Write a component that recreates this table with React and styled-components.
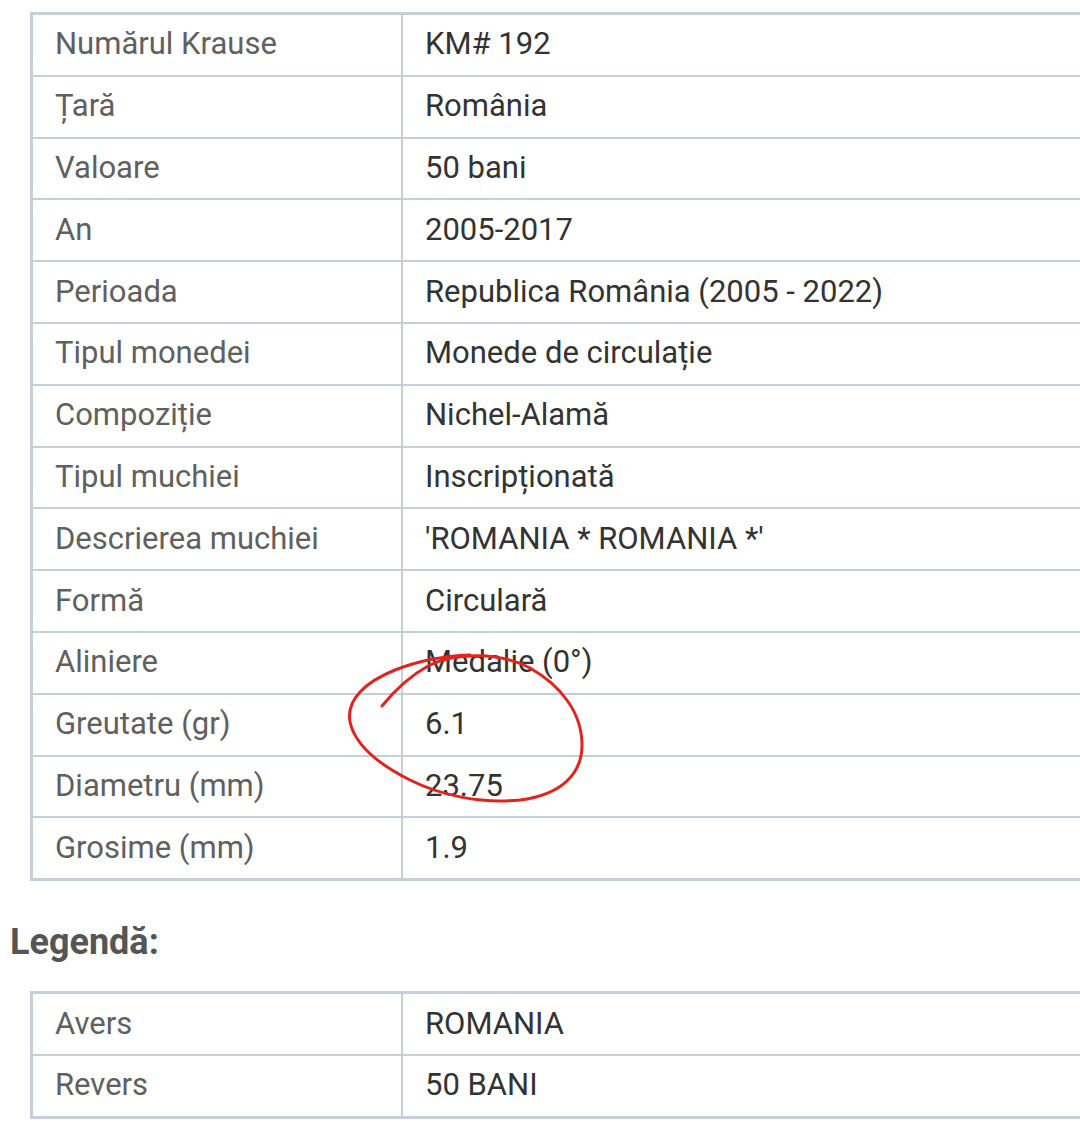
import styled, { createGlobalStyle } from "styled-components";

const GlobalStyle = createGlobalStyle`
  body {
    margin: 0;
    background: #fff;
    font-family: Roboto, "Noto Sans", sans-serif;
    overflow: hidden;
  }
`;

const Page = styled.div`
  position: relative;
  width: 1080px;
  padding-top: 12px;
`;

const Table = styled.table`
  margin-left: 30px;
  width: 1100px;
  border-collapse: collapse;
  table-layout: fixed;
  border: 3px solid #c7cfd6;
`;

const Cell = styled.td`
  border: 2px solid #c7cfd6;
  height: 57.8px;
  padding: 0 0 2px 22px;
  font-size: 31px;
  color: ${(p) => (p.$label ? "#606060" : "#333")};
  width: ${(p) => (p.$label ? "346px" : "auto")};
  vertical-align: middle;
  white-space: nowrap;
`;

const Heading = styled.h3`
  margin: 39px 0 27px 10px;
  font-size: 36px;
  line-height: 44px;
  font-weight: 700;
  color: #555;
`;

const Scribble = styled.svg`
  position: absolute;
  left: 0;
  top: 0;
  pointer-events: none;
`;

const details = [
  ["Numărul Krause", "KM# 192"],
  ["Țară", "România"],
  ["Valoare", "50 bani"],
  ["An", "2005-2017"],
  ["Perioada", "Republica România (2005 - 2022)"],
  ["Tipul monedei", "Monede de circulație"],
  ["Compoziție", "Nichel-Alamă"],
  ["Tipul muchiei", "Inscripționată"],
  ["Descrierea muchiei", "'ROMANIA * ROMANIA *'"],
  ["Formă", "Circulară"],
  ["Aliniere", "Medalie (0°)"],
  ["Greutate (gr)", "6.1"],
  ["Diametru (mm)", "23.75"],
  ["Grosime (mm)", "1.9"],
];

const legend = [
  ["Avers", "ROMANIA"],
  ["Revers", "50 BANI"],
];

function InfoTable({ rows }) {
  return (
    <Table>
      <tbody>
        {rows.map(([k, v]) => (
          <tr key={k}>
            <Cell $label>{k}</Cell>
            <Cell>{v}</Cell>
          </tr>
        ))}
      </tbody>
    </Table>
  );
}

export default function App() {
  return (
    <Page>
      <GlobalStyle />
      <InfoTable rows={details} />
      <Heading>Legendă:</Heading>
      <InfoTable rows={legend} />
      <Scribble width="1080" height="1146" viewBox="0 0 1080 1146">
        <path
          d="M382 706 C395 690 410 676 428 666 C455 652 500 652 530 668 C560 685 582 712 582 745 C582 775 560 795 520 800 C480 804 440 795 410 780 C380 765 355 745 350 722 C346 700 365 682 395 670 C420 660 445 656 470 655"
          fill="none"
          stroke="#e3231c"
          strokeWidth="3"
          strokeLinecap="round"
        />
      </Scribble>
    </Page>
  );
}
